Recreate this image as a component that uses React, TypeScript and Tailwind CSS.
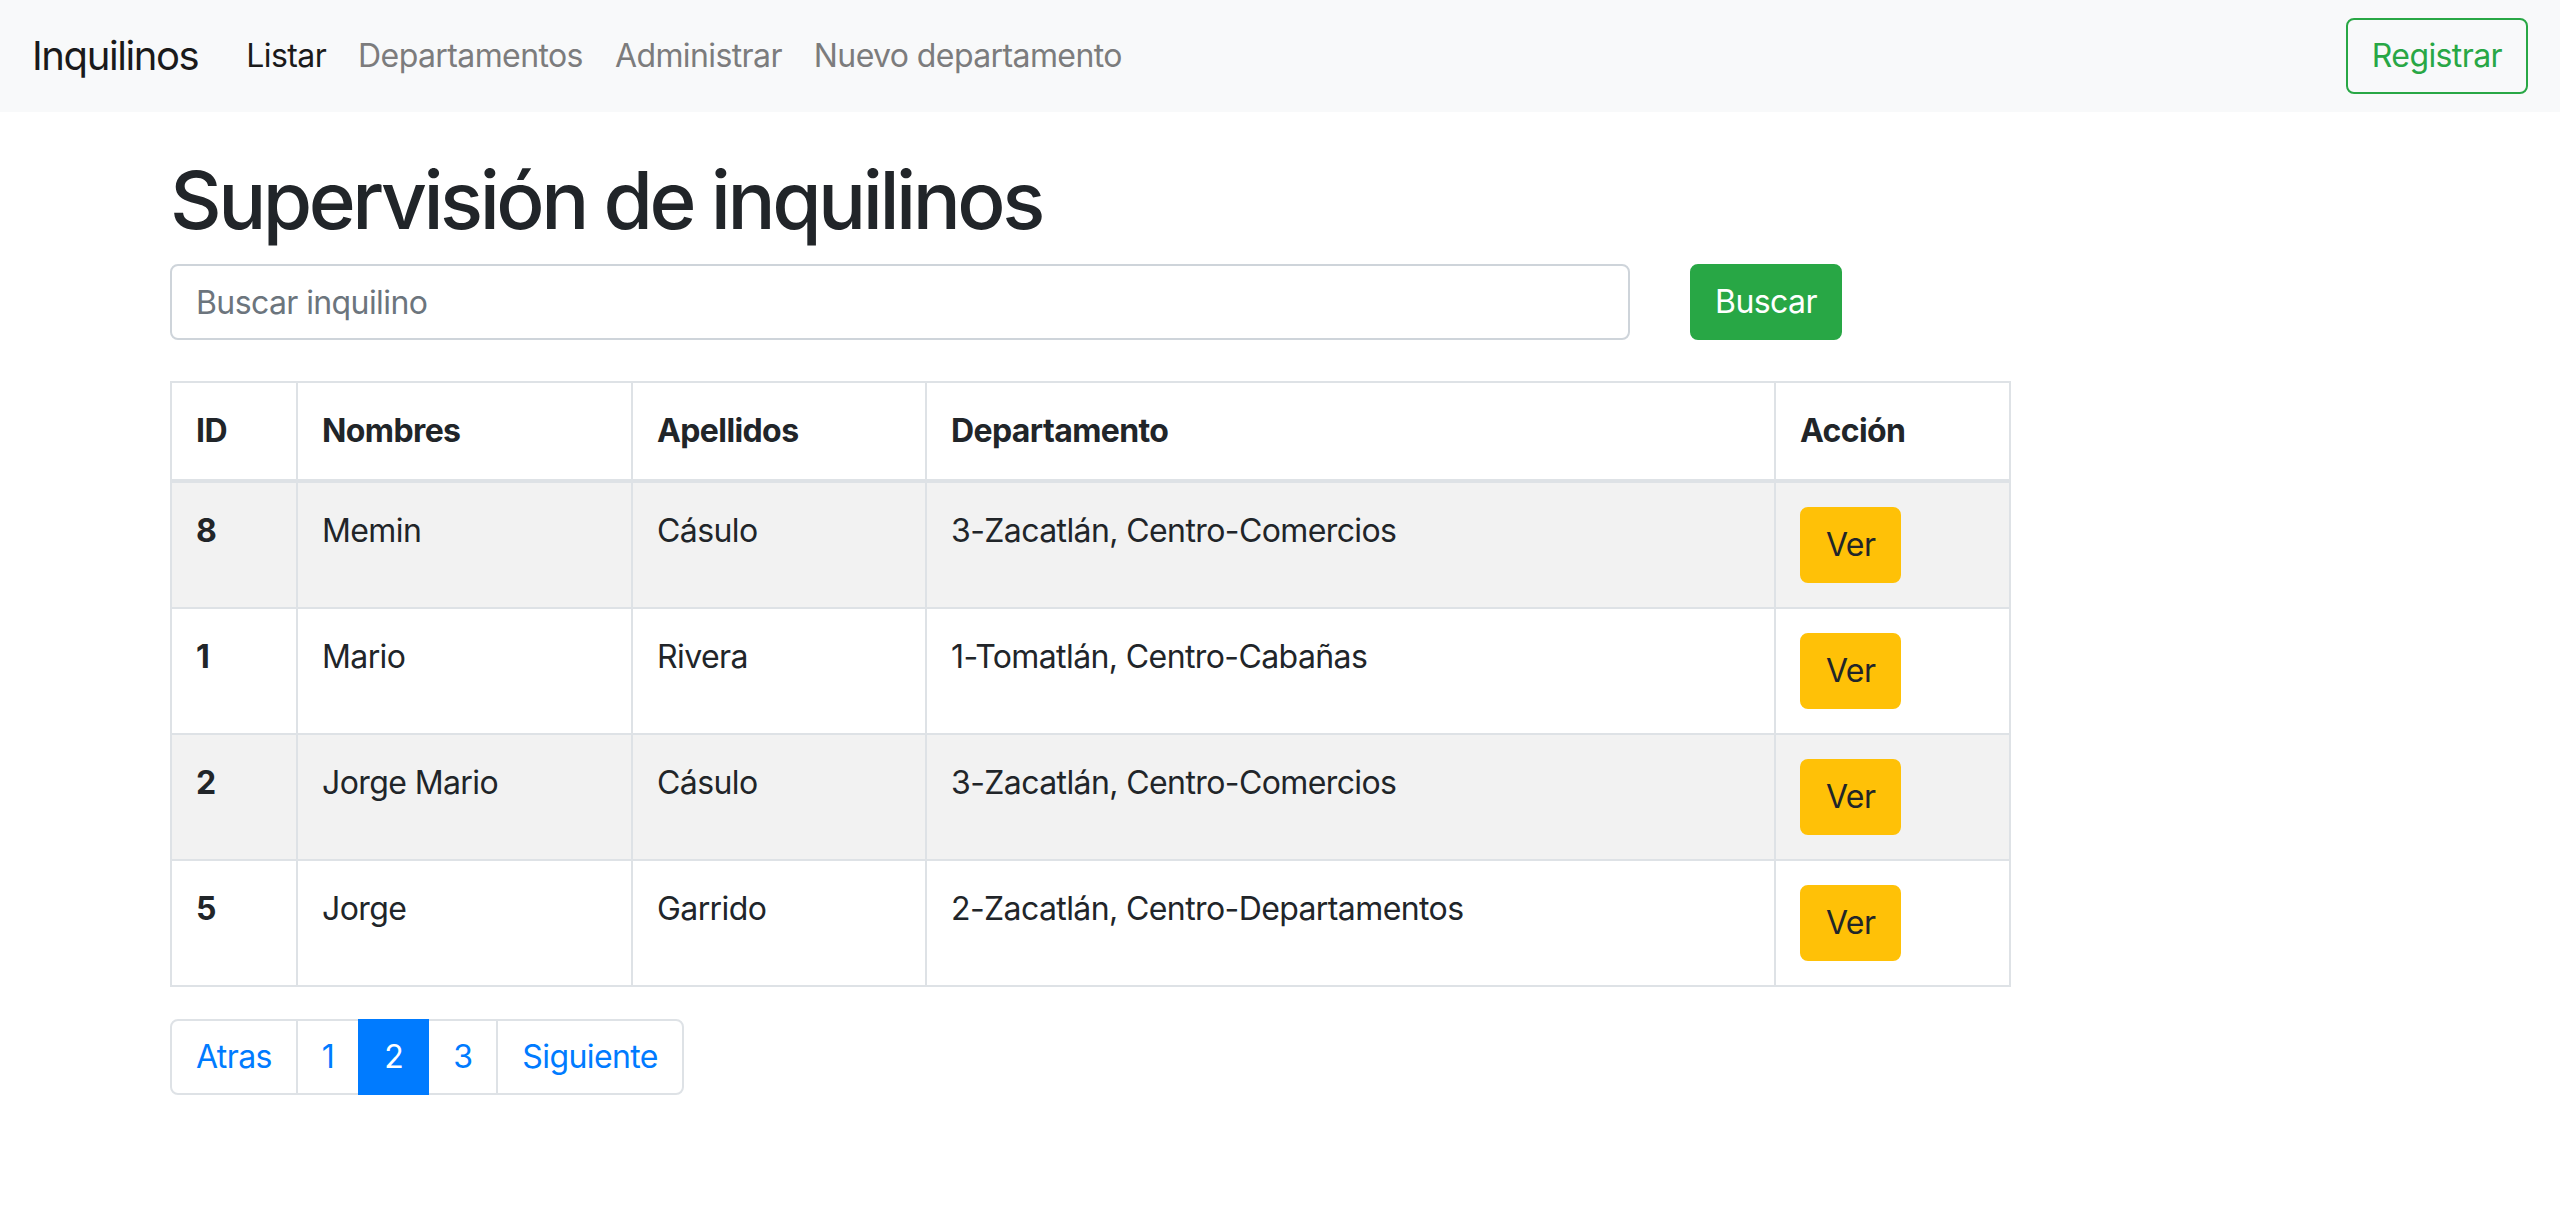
import React from 'react';

type Row = { id: number; nombres: string; apellidos: string; depto: string };

const rows: Row[] = [
  { id: 8, nombres: 'Memin', apellidos: 'Cásulo', depto: '3-Zacatlán, Centro-Comercios' },
  { id: 1, nombres: 'Mario', apellidos: 'Rivera', depto: '1-Tomatlán, Centro-Cabañas' },
  { id: 2, nombres: 'Jorge Mario', apellidos: 'Cásulo', depto: '3-Zacatlán, Centro-Comercios' },
  { id: 5, nombres: 'Jorge', apellidos: 'Garrido', depto: '2-Zacatlán, Centro-Departamentos' },
];

const navLinks = [
  { text: 'Listar', active: true },
  { text: 'Departamentos', active: false },
  { text: 'Administrar', active: false },
  { text: 'Nuevo departamento', active: false },
];

const pages = [
  { text: 'Atras', active: false },
  { text: '1', active: false },
  { text: '2', active: true },
  { text: '3', active: false },
  { text: 'Siguiente', active: false },
];

const Navbar: React.FC = () => (
  <nav className="flex h-[112px] items-center justify-between bg-[#f8f9fa] px-[32px]">
    <div className="flex items-center">
      <a href="#" className="mr-[32px] py-[10px] text-[40px] leading-[60px] tracking-[-1.4px] text-[#1a1a1a]">
        Inquilinos
      </a>
      <ul className="flex">
        {navLinks.map((l) => (
          <li key={l.text}>
            <a
              href="#"
              className={
                l.active
                  ? 'block px-[16px] py-[16px] text-[32px] leading-[48px] text-[#1a1a1a]'
                  : 'block px-[16px] py-[16px] text-[32px] leading-[48px] text-[#7c7c7d]'
              }
            >
              {l.text}
            </a>
          </li>
        ))}
      </ul>
    </div>
    <button className="h-[76px] rounded-[8px] border-2 border-[#28a745] px-[24px] text-[32px] leading-[48px] text-[#28a745]">
      Registrar
    </button>
  </nav>
);

const Pagination: React.FC = () => (
  <ul className="flex">
    {pages.map((p, i) => (
      <li key={p.text} className={i === 0 ? '' : '-ml-[2px]'}>
        <a
          href="#"
          className={[
            'block border-2 px-[24px] py-[16px] text-[32px] leading-[40px]',
            p.active ? 'relative z-10 border-[#007bff] bg-[#007bff] text-white' : 'border-[#dee2e6] bg-white text-[#007bff]',
            i === 0 ? 'rounded-l-[8px]' : '',
            i === pages.length - 1 ? 'rounded-r-[8px]' : '',
          ].join(' ')}
        >
          {p.text}
        </a>
      </li>
    ))}
  </ul>
);

export default function App() {
  return (
    <div className="min-h-screen bg-white font-['Inter','Liberation_Sans',sans-serif] tracking-[-0.6px] text-[#212529]">
      <Navbar />
      <main className="mx-auto w-[2280px] px-[30px] pt-[40px]">
        <h1 className="mb-[16px] text-[80px] font-medium leading-[96px] tracking-[-3.5px]">Supervisión de inquilinos</h1>

        <form className="flex items-center gap-[60px]" onSubmit={(e) => e.preventDefault()}>
          <input
            type="text"
            placeholder="Buscar inquilino"
            className="h-[76px] w-[1460px] rounded-[8px] border-2 border-[#ced4da] px-[24px] text-[32px] text-[#495057] placeholder:text-[#6c757d] outline-none"
          />
          <button className="h-[76px] w-[152px] rounded-[8px] border-2 border-[#28a745] bg-[#28a745] text-[32px] leading-[48px] text-white">
            Buscar
          </button>
        </form>

        <table className="mt-[41px] mb-[32px] w-[1839px] table-fixed border-collapse text-left text-[32px] leading-[48px]">
          <colgroup>
            <col className="w-[126px]" />
            <col className="w-[335px]" />
            <col className="w-[294px]" />
            <col className="w-[849px]" />
            <col className="w-[235px]" />
          </colgroup>
          <thead>
            <tr>
              {['ID', 'Nombres', 'Apellidos', 'Departamento', 'Acción'].map((h) => (
                <th key={h} className="border-2 border-b-4 border-[#dee2e6] p-[24px] align-bottom font-bold">
                  {h}
                </th>
              ))}
            </tr>
          </thead>
          <tbody>
            {rows.map((r, i) => (
              <tr key={r.id} className={i % 2 === 0 ? 'bg-[#f2f2f2]' : 'bg-white'}>
                <th className="border-2 border-[#dee2e6] p-[24px] align-top font-bold">{r.id}</th>
                <td className="border-2 border-[#dee2e6] p-[24px] align-top">{r.nombres}</td>
                <td className="border-2 border-[#dee2e6] p-[24px] align-top">{r.apellidos}</td>
                <td className="border-2 border-[#dee2e6] p-[24px] align-top">{r.depto}</td>
                <td className="border-2 border-[#dee2e6] p-[24px] align-top">
                  <button className="block h-[76px] rounded-[8px] border-2 border-[#ffc107] bg-[#ffc107] px-[24px] text-[32px] leading-[48px] text-[#212529]">
                    Ver
                  </button>
                </td>
              </tr>
            ))}
          </tbody>
        </table>

        <Pagination />
      </main>
    </div>
  );
}
